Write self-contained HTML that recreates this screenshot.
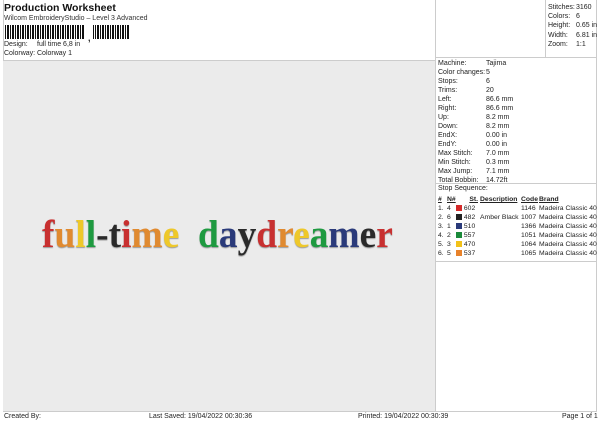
<!DOCTYPE html>
<html><head><meta charset="utf-8"><style>
body{margin:0;width:600px;height:424px;background:#fff;font-family:"Liberation Sans",sans-serif;font-size:7px;color:#222;position:relative;overflow:hidden}
.a{position:absolute}
table{border-collapse:collapse;font-size:6.8px}
td{padding:0;height:9px;line-height:9px;white-space:nowrap}
.sw{display:inline-block;width:6px;height:6px;vertical-align:-1px}
</style></head><body>
<div class="a" style="left:3px;top:0;width:594px;height:412px;border:1px solid #ccc;border-top:none;box-sizing:border-box"></div>
<div class="a" style="left:4px;top:2px;font-size:10.5px;font-weight:bold;color:#111">Production Worksheet</div>
<div class="a" style="left:4px;top:15px;color:#333">Wilcom EmbroideryStudio – Level 3 Advanced</div>
<div class="a" style="left:5px;top:25px;width:125px;height:14px;background:repeating-linear-gradient(90deg,#111 0 1px,#fff 1px 2px,#111 2px 4px,#fff 4px 5px)"></div>
<div class="a" style="left:85px;top:25px;width:8px;height:14px;background:#fff"></div>
<div class="a" style="left:88px;top:33px;font-weight:bold;font-size:9px">,</div>
<div class="a" style="left:4px;top:41px">Design:</div><div class="a" style="left:37px;top:41px">full time 6,8 in</div>
<div class="a" style="left:4px;top:50px">Colorway:</div><div class="a" style="left:37px;top:50px">Colorway 1</div>
<div class="a" style="left:3px;top:60px;width:432px;height:350px;background:#ebebeb;border-top:1px solid #ccc"></div>
<div class="a" style="left:435px;top:0;width:1px;height:411px;background:#ccc"></div>
<div class="a" style="left:545px;top:0;width:1px;height:57px;background:#ccc"></div>
<div class="a" style="left:435px;top:57px;width:162px;height:1px;background:#ccc"></div>
<div class="a" style="left:435px;top:183px;width:162px;height:1px;background:#ccc"></div>
<div class="a" style="left:435px;top:261px;width:162px;height:1px;background:#ccc"></div>
<div class="a" style="left:548px;top:3px;line-height:9.2px">Stitches:<br>Colors:<br>Height:<br>Width:<br>Zoom:</div>
<div class="a" style="left:576px;top:3px;line-height:9.2px">3160<br>6<br>0.65 in<br>6.81 in<br>1:1</div>
<div class="a" style="left:438px;top:59px;line-height:9px">Machine:<br>Color changes:<br>Stops:<br>Trims:<br>Left:<br>Right:<br>Up:<br>Down:<br>EndX:<br>EndY:<br>Max Stitch:<br>Min Stitch:<br>Max Jump:<br>Total Bobbin:</div>
<div class="a" style="left:486px;top:59px;line-height:9px">Tajima<br>5<br>6<br>20<br>86.6 mm<br>86.6 mm<br>8.2 mm<br>8.2 mm<br>0.00 in<br>0.00 in<br>7.0 mm<br>0.3 mm<br>7.1 mm<br>14.72ft</div>
<div class="a" style="left:438px;top:185px">Stop Sequence:</div>
<table class="a" style="left:438px;top:195px">
<tr style="font-weight:bold;text-decoration:underline"><td style="width:9px">#</td><td style="width:9px">N#</td><td style="width:22px;text-align:right;padding-right:2px">St.</td><td style="width:41px">Description</td><td style="width:18px">Code</td><td>Brand</td></tr>
<tr><td>1.</td><td>4</td><td><span class="sw" style="background:#d42a2a"></span> 602</td><td></td><td>1146</td><td>Madeira Classic 40</td></tr>
<tr><td>2.</td><td>6</td><td><span class="sw" style="background:#222"></span> 482</td><td>Amber Black</td><td>1007</td><td>Madeira Classic 40</td></tr>
<tr><td>3.</td><td>1</td><td><span class="sw" style="background:#2a3a7a"></span> 510</td><td></td><td>1366</td><td>Madeira Classic 40</td></tr>
<tr><td>4.</td><td>2</td><td><span class="sw" style="background:#1a8a3a"></span> 557</td><td></td><td>1051</td><td>Madeira Classic 40</td></tr>
<tr><td>5.</td><td>3</td><td><span class="sw" style="background:#f2c21a"></span> 470</td><td></td><td>1064</td><td>Madeira Classic 40</td></tr>
<tr><td>6.</td><td>5</td><td><span class="sw" style="background:#e8822a"></span> 537</td><td></td><td>1065</td><td>Madeira Classic 40</td></tr>
</table>
<div class="a" style="left:42px;top:212px;font-family:'Liberation Serif',serif;font-size:39px;font-weight:bold;white-space:nowrap;transform:scaleX(0.96);transform-origin:left;text-shadow:0 1px 1px rgba(0,0,0,.35)"><span style="color:#c83030">f</span><span style="color:#e08a30">u</span><span style="color:#eec82a">l</span><span style="color:#1e9a40">l</span><span style="color:#2a2a2a">-t</span><span style="color:#c83030">i</span><span style="color:#e08a30">m</span><span style="color:#eec82a">e</span>&nbsp;&nbsp;<span style="color:#1e9a40">d</span><span style="color:#2a3a7a">a</span><span style="color:#2a2a2a">y</span><span style="color:#c83030">d</span><span style="color:#e08a30">r</span><span style="color:#eec82a">e</span><span style="color:#1e9a40">a</span><span style="color:#2a3a7a">m</span><span style="color:#2a2a2a">e</span><span style="color:#c83030">r</span></div>
<div class="a" style="left:3px;top:411px;width:594px;height:1px;background:#ccc"></div>
<div class="a" style="left:4px;top:413px">Created By:</div>
<div class="a" style="left:149px;top:413px">Last Saved: 19/04/2022 00:30:36</div>
<div class="a" style="left:358px;top:413px">Printed: 19/04/2022 00:30:39</div>
<div class="a" style="left:562px;top:413px">Page 1 of 1</div>
</body></html>
